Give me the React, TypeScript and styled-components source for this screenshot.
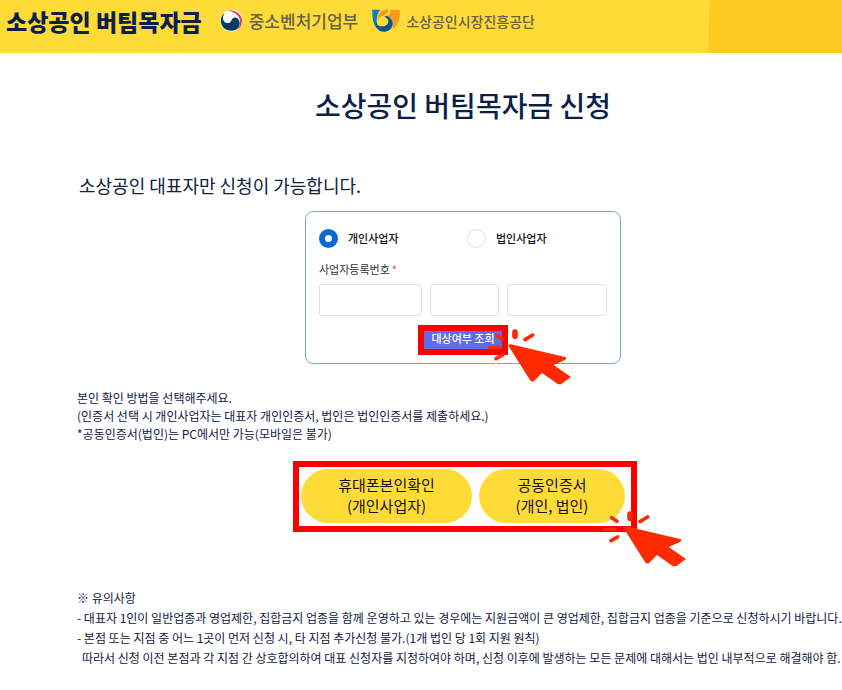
import React, { useState } from "react";
import styled, { createGlobalStyle } from "styled-components";

const colors = {
  navy: "#0c1f49",
  ink: "#10203f",
  yellow: "#ffdb38",
  amber: "#ffcb23",
  frame: "#ff0000",
  pointer: "#ff2a00",
  blue: "#0468d7",
};

const GlobalStyle = createGlobalStyle`
  *, *::before, *::after { box-sizing: border-box; }
  body {
    margin: 0;
    background: #fff;
    color: ${colors.ink};
    font-family: "Noto Sans CJK KR", "Noto Sans", sans-serif;
    font-size: 12px;
  }
  button, input { font: inherit; }
  h1, h2, p, fieldset { margin: 0; padding: 0; border: 0; font-weight: 400; }
`;

const Header = styled.header`
  display: flex;
  align-items: center;
  height: 53px;
  padding: 0 0 12px 6px;
  background: linear-gradient(
    91deg,
    ${colors.yellow} calc(100% - 134px),
    ${colors.amber} calc(100% - 133px)
  );
`;

const Brand = styled.a`
  margin-right: 18px;
  color: ${colors.navy};
  font-size: 23px;
  font-weight: 900;
  line-height: 32px;
  text-decoration: none;
  white-space: nowrap;
`;

const Agency = styled.a<{ $size: number }>`
  display: flex;
  align-items: center;
  gap: 6px;
  margin-right: 14px;
  color: #66614c;
  font-size: ${(p) => p.$size}px;
  font-weight: 500;
  line-height: 24px;
  text-decoration: none;
  white-space: nowrap;
`;

const Main = styled.main`
  padding: 32px 0 20px;
`;

const Centered = styled.div`
  display: flex;
  justify-content: center;
  padding-left: 84px;
`;

const Title = styled.h1`
  color: ${colors.navy};
  font-size: 28px;
  font-weight: 500;
  line-height: 40px;
`;

const Lead = styled.h2`
  margin: 46px 0 12px;
  padding-left: 79px;
  font-size: 18px;
  line-height: 28px;
`;

const Card = styled.form`
  display: flex;
  flex-direction: column;
  width: 316px;
  padding: 16px 13px 8px;
  border: 1px solid #72a9d8;
  border-radius: 8px;
`;

const RadioRow = styled.fieldset`
  display: grid;
  grid-template-columns: 148px 1fr;
`;

const RadioLabel = styled.label`
  display: flex;
  align-items: center;
  gap: 10px;
  height: 20px;
  color: #111;
  font-size: 11px;
  font-weight: 500;
`;

const Radio = styled.input`
  appearance: none;
  width: 19px;
  height: 19px;
  margin: 0;
  border: 1px solid #dcdfe3;
  border-radius: 50%;
  background: #fff;

  &:checked {
    border: 6px solid ${colors.blue};
  }
`;

const FieldLabel = styled.label`
  margin: 12px 0 6px;
  color: #2f3440;
  font-size: 11px;
  line-height: 18px;
`;

const Required = styled.span`
  margin-left: 2px;
  color: #f0444a;
`;

const NumberFields = styled.div`
  display: grid;
  grid-template-columns: 103fr 69fr 100fr;
  gap: 8px;
`;

const NumberInput = styled.input`
  width: 100%;
  min-width: 0;
  height: 32px;
  padding: 0 8px;
  border: 1px solid #dfe0e3;
  border-radius: 3px;
  background: #fff;
`;

const Marked = styled.div`
  position: relative;
  align-self: center;
  margin-top: 9px;
`;

const LookupButton = styled.button`
  display: block;
  width: 90px;
  height: 30px;
  padding: 0 0 4px;
  border: 6px solid ${colors.frame};
  background: #5d6cee;
  color: #fff;
  font-size: 11px;
  font-weight: 500;
  line-height: 14px;
  white-space: nowrap;
`;

const PointerMark = styled.svg`
  position: absolute;
  right: -65px;
  bottom: -31px;
  width: 90px;
  height: 60px;
  pointer-events: none;
`;

const MethodPointerMark = styled(PointerMark)`
  right: -57px;
  bottom: -42px;
`;

const TextBlock = styled.section<{ $line: number; $top: number; $bottom: number }>`
  margin: ${(p) => p.$top}px 0 ${(p) => p.$bottom}px;
  padding-left: 77px;
  font-size: 12px;
  line-height: ${(p) => p.$line}px;
  white-space: nowrap;
`;

const Continued = styled.p`
  padding-left: 5px;
`;

const Methods = styled.div`
  position: relative;
  display: flex;
  gap: 7px;
  margin-left: 4px;
  padding: 2px 6px 3px 2px;
  border: 6px solid ${colors.frame};
`;

const MethodButton = styled.button<{ $width: number }>`
  width: ${(p) => p.$width}px;
  height: 54px;
  padding: 0 0 2px;
  border: 0;
  border-radius: 27px;
  background: ${colors.yellow};
  color: #111;
  font-size: 15px;
  line-height: 21px;
`;

const PointerShapes = () => (
  <>
    <path
      d="M334 90 L496 128 Q504 131 497 136 L462 152 L514 188 L486 208 Q480 212 473 208 L427 176 L404 199 Q397 205 391 197 L327 96 Q325 88 334 90Z"
      fill={colors.pointer}
    />
    <g stroke={colors.pointer} strokeLinecap="round" fill="none">
      <path d="M346 53V66" strokeWidth="17" />
      <path d="M376 76L399 62" strokeWidth="11" />
      <path d="M291 64L307 75" strokeWidth="11" />
      <path d="M269 99L302 99" strokeWidth="10" />
      <path d="M289 133L309 122" strokeWidth="11" />
    </g>
  </>
);

const MinistryLogo = () => (
  <svg width="23" height="23" viewBox="0 0 46 46" aria-hidden="true">
    <circle cx="23" cy="23" r="22" fill="#fff" />
    <path d="M14 3 C30 0 45 11 44 25 C43 33 40 38 36 41 C41 32 42 23 37 15 C31 7 23 4 14 3Z" fill="#e8364c" />
    <path
      d="M10 7 C1 13 -1 27 6 36 C14 46 31 46 37 37 C42 29 39 18 31 17 C23 16 24 27 17 28 C10 29 6 24 6 18 C6 13 8 9 10 7Z"
      fill="#063b68"
    />
  </svg>
);

const ServiceLogo = () => (
  <svg width="28" height="23" viewBox="0 0 84 69" aria-hidden="true">
    <path d="M1 2 H25 C17 12 14 24 14 36 L16 60 C4 48 0 28 1 2Z" fill="#087fc4" />
    <path
      d="M12 32 C11 42 16 52 30 52 C42 52 49 46 49 37 C49 30 43 26 36 23 L47 20 C58 25 64 34 62 47 C59 61 48 68 35 68 C19 68 8 54 12 32Z"
      fill="#07559b"
    />
    <path d="M17 34 C17 12 29 2 49 1 C51 9 45 14 37 18 C27 22 20 26 17 34Z" fill="#f39a1e" />
    <path d="M54 2 H83 C85 29 80 49 61 60 C68 43 62 31 46 21 C54 17 56 11 54 2Z" fill="#f59b1d" />
  </svg>
);

export default function App() {
  const [kind, setKind] = useState("personal");

  return (
    <>
      <GlobalStyle />
      <Header>
        <Brand href="#">소상공인 버팀목자금</Brand>
        <Agency href="#" $size={17}>
          <MinistryLogo />
          중소벤처기업부
        </Agency>
        <Agency href="#" $size={14}>
          <ServiceLogo />
          소상공인시장진흥공단
        </Agency>
      </Header>
      <Main>
        <Centered>
          <Title>소상공인 버팀목자금 신청</Title>
        </Centered>
        <Lead>소상공인 대표자만 신청이 가능합니다.</Lead>
        <Centered>
          <Card onSubmit={(e) => e.preventDefault()}>
            <RadioRow aria-label="사업자 구분">
              <RadioLabel>
                <Radio
                  type="radio"
                  name="kind"
                  checked={kind === "personal"}
                  onChange={() => setKind("personal")}
                />
                개인사업자
              </RadioLabel>
              <RadioLabel>
                <Radio
                  type="radio"
                  name="kind"
                  checked={kind === "corporate"}
                  onChange={() => setKind("corporate")}
                />
                법인사업자
              </RadioLabel>
            </RadioRow>
            <FieldLabel htmlFor="biz-number-1">
              사업자등록번호<Required>*</Required>
            </FieldLabel>
            <NumberFields>
              <NumberInput id="biz-number-1" maxLength={3} />
              <NumberInput aria-label="사업자등록번호 2" maxLength={2} />
              <NumberInput aria-label="사업자등록번호 3" maxLength={5} />
            </NumberFields>
            <Marked>
              <LookupButton type="submit">대상여부 조회</LookupButton>
              <PointerMark viewBox="250 35 270 180" aria-hidden="true">
                <PointerShapes />
              </PointerMark>
            </Marked>
          </Card>
        </Centered>
        <TextBlock $line={18} $top={25} $bottom={18}>
          <p>본인 확인 방법을 선택해주세요.</p>
          <p>(인증서 선택 시 개인사업자는 대표자 개인인증서, 법인은 법인인증서를 제출하세요.)</p>
          <p>*공동인증서(법인)는 PC에서만 가능(모바일은 불가)</p>
        </TextBlock>
        <Centered>
          <Methods>
            <MethodButton type="button" $width={171}>
              휴대폰본인확인
              <br />
              (개인사업자)
            </MethodButton>
            <MethodButton type="button" $width={146}>
              공동인증서
              <br />
              (개인, 법인)
            </MethodButton>
            <MethodPointerMark viewBox="250 35 270 180" aria-hidden="true">
              <PointerShapes />
            </MethodPointerMark>
          </Methods>
        </Centered>
        <TextBlock $line={20} $top={56} $bottom={0}>
          <p>※ 유의사항</p>
          <p>
            - 대표자 1인이 일반업종과 영업제한, 집합금지 업종을 함께 운영하고 있는 경우에는 지원금액이 큰 영업제한,
            집합금지 업종을 기준으로 신청하시기 바랍니다.
          </p>
          <p>- 본점 또는 지점 중 어느 1곳이 먼저 신청 시, 타 지점 추가신청 불가.(1개 법인 당 1회 지원 원칙)</p>
          <Continued>
            따라서 신청 이전 본점과 각 지점 간 상호합의하여 대표 신청자를 지정하여야 하며, 신청 이후에 발생하는 모든
            문제에 대해서는 법인 내부적으로 해결해야 함.
          </Continued>
        </TextBlock>
      </Main>
    </>
  );
}
